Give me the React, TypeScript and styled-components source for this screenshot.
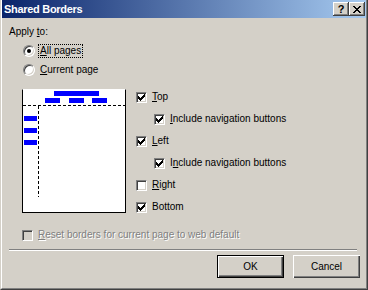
import styled, { createGlobalStyle } from "styled-components";

const GlobalStyle = createGlobalStyle`
  body {
    margin: 0;
    background: #d4d0c8;
    font-family: "Liberation Sans", Arial, sans-serif;
    font-size: 10px;
  }
`;

export const Window = styled.div`
  width: 368px;
  height: 290px;
  box-sizing: border-box;
  background: #d4d0c8;
  border-left: 1px solid #d4d0c8;
  border-right: 1px solid #404040;
  border-bottom: 1px solid #404040;
  display: flex;
  flex-direction: column;
`;

export const Frame = styled.div`
  flex: 1;
  min-height: 0;
  display: flex;
  flex-direction: column;
  border-left: 1px solid #fff;
  border-right: 1px solid #808080;
  border-bottom: 1px solid #808080;
`;

export const TitleBar = styled.div`
  height: 18px;
  flex-shrink: 0;
  display: flex;
  align-items: center;
  justify-content: space-between;
  padding: 0 1px 0 2px;
  background: linear-gradient(to right, #0a246a, #a6caf0);
`;

export const TitleText = styled.span`
  color: #fff;
  font-weight: bold;
  font-size: 11px;
  letter-spacing: -0.3px;
`;

export const TitleButtons = styled.div`
  display: flex;
`;

export const CaptionButton = styled.div`
  width: 16px;
  height: 14px;
  box-sizing: border-box;
  background: #d4d0c8;
  box-shadow: inset -1px -1px 0 #404040, inset 1px 1px 0 #fff, inset -2px -2px 0 #808080;
  display: flex;
  align-items: center;
  justify-content: center;
  font-weight: bold;
  font-size: 11px;
  line-height: 12px;
  color: #000;
`;

export const Content = styled.div`
  flex: 1;
  display: flex;
  flex-direction: column;
  padding: 8px 6px 0 7px;
`;

export const Caption = styled.div`
  height: 12px;
  line-height: 12px;
`;

export const RadioGroup = styled.div`
  display: flex;
  flex-direction: column;
  gap: 5px;
  margin: 6px 0 0 14px;
`;

export const OptionRow = styled.div<{ $indent?: number }>`
  display: flex;
  align-items: center;
  height: 14px;
  gap: 4px;
  margin-left: ${(p) => p.$indent ?? 0}px;
`;

export const RadioCircle = styled.span<{ $checked?: boolean }>`
  width: 12px;
  height: 12px;
  flex-shrink: 0;
  box-sizing: border-box;
  border-radius: 50%;
  border: 1px solid;
  border-color: #808080 #fff #fff #808080;
  background: #fff;
  box-shadow: inset 1px 1px 0 #404040, inset -1px -1px 0 #d4d0c8;
  display: flex;
  align-items: center;
  justify-content: center;
  &::after {
    content: "";
    width: 4px;
    height: 4px;
    border-radius: 50%;
    background: #000;
    display: ${(p) => (p.$checked ? "block" : "none")};
  }
`;

export const Label = styled.span<{ $focus?: boolean; $disabled?: boolean }>`
  line-height: 12px;
  white-space: nowrap;
  padding: 0 1px;
  outline: ${(p) => (p.$focus ? "1px dotted #000" : "none")};
  color: ${(p) => (p.$disabled ? "#808080" : "#000")};
  text-shadow: ${(p) => (p.$disabled ? "1px 1px 0 #fff" : "none")};
`;

export const MainRow = styled.div`
  display: flex;
  align-items: flex-start;
  margin-top: 12px;
`;

export const Preview = styled.div`
  width: 104px;
  height: 124px;
  box-sizing: border-box;
  margin-left: 13px;
  background: #fff;
  border: 1px solid #000;
  border-top-color: #fff;
  svg {
    display: block;
  }
`;

export const CheckColumn = styled.div`
  display: flex;
  flex-direction: column;
  gap: 6px;
  margin-left: 10px;
`;

export const CheckRow = styled.div<{ $indent?: boolean }>`
  display: flex;
  align-items: center;
  height: 16px;
  gap: 4px;
  margin-left: ${(p) => (p.$indent ? 18 : 0)}px;
`;

export const Box = styled.span<{ $disabled?: boolean }>`
  width: 11px;
  height: 11px;
  flex-shrink: 0;
  box-sizing: border-box;
  border: 1px solid;
  border-color: #808080 #fff #fff #808080;
  box-shadow: inset 1px 1px 0 #404040, inset -1px -1px 0 #d4d0c8;
  background: ${(p) => (p.$disabled ? "#d4d0c8" : "#fff")};
  display: flex;
  align-items: center;
  justify-content: center;
`;

export const ResetRow = styled(OptionRow)`
  margin-top: 13px;
  margin-left: 13px;
`;

export const Separator = styled.div`
  height: 0;
  border-top: 1px solid #808080;
  border-bottom: 1px solid #fff;
  margin: 7px 3px 0 0;
`;

export const ButtonRow = styled.div`
  display: flex;
  justify-content: flex-end;
  gap: 9px;
  margin-top: 4px;
`;

export const PushButton = styled.button<{ $default?: boolean }>`
  width: 67px;
  height: 23px;
  box-sizing: border-box;
  padding: 0;
  font-family: inherit;
  font-size: 10px;
  color: #000;
  background: #d4d0c8;
  border: ${(p) => (p.$default ? "1px solid #000" : "none")};
  box-shadow: inset 1px 1px 0 #fff, inset -1px -1px 0 #404040, inset -2px -2px 0 #808080;
`;

const Check = () => (
  <svg width="7" height="7" viewBox="0 0 7 7" shapeRendering="crispEdges">
    <path
      fill="#000"
      d="M6 0h1v1h-1z M5 1h2v1h-2z M0 2h1v1h-1z M4 2h3v1h-3z M0 3h2v1h-2z M3 3h3v1h-3z M0 4h5v1h-5z M1 5h3v1h-3z M2 6h1v1h-1z"
    />
  </svg>
);

const CloseGlyph = () => (
  <svg width="8" height="7" viewBox="0 0 8 7" shapeRendering="crispEdges">
    <path
      fill="#000"
      d="M0 0h2v1h-2z M6 0h2v1h-2z M1 1h2v1h-2z M5 1h2v1h-2z M2 2h4v1h-4z M3 3h2v1h-2z M2 4h4v1h-4z M1 5h2v1h-2z M5 5h2v1h-2z M0 6h2v1h-2z M6 6h2v1h-2z"
    />
  </svg>
);

const PagePreview = () => (
  <svg width="102" height="122" viewBox="0 0 102 122">
    <g fill="#0000ff">
      <rect x="31" y="1" width="45" height="5" />
      <rect x="22" y="8" width="15" height="5" />
      <rect x="46" y="8" width="15" height="5" />
      <rect x="69" y="8" width="15" height="5" />
      <rect x="1" y="26" width="13" height="5" />
      <rect x="1" y="38" width="13" height="5" />
      <rect x="1" y="50" width="13" height="5" />
    </g>
    <line x1="0" y1="15.5" x2="102" y2="15.5" stroke="#000" strokeDasharray="3 2" />
    <line x1="15.5" y1="16" x2="15.5" y2="107" stroke="#000" strokeDasharray="3 2" />
  </svg>
);

const CheckOption = ({
  checked,
  indent,
  children,
}: {
  checked: boolean;
  indent?: boolean;
  children: React.ReactNode;
}) => (
  <CheckRow $indent={indent}>
    <Box>{checked && <Check />}</Box>
    <Label>{children}</Label>
  </CheckRow>
);

export default function App() {
  return (
    <>
      <GlobalStyle />
      <Window>
        <Frame>
          <TitleBar>
            <TitleText>Shared Borders</TitleText>
            <TitleButtons>
              <CaptionButton>?</CaptionButton>
              <CaptionButton>
                <CloseGlyph />
              </CaptionButton>
            </TitleButtons>
          </TitleBar>
          <Content>
            <Caption>
              Apply <u>t</u>o:
            </Caption>
            <RadioGroup>
              <OptionRow>
                <RadioCircle $checked />
                <Label $focus>
                  <u>A</u>ll pages
                </Label>
              </OptionRow>
              <OptionRow>
                <RadioCircle />
                <Label>
                  <u>C</u>urrent page
                </Label>
              </OptionRow>
            </RadioGroup>
            <MainRow>
              <Preview>
                <PagePreview />
              </Preview>
              <CheckColumn>
                <CheckOption checked>
                  <u>T</u>op
                </CheckOption>
                <CheckOption checked indent>
                  <u>I</u>nclude navigation buttons
                </CheckOption>
                <CheckOption checked>
                  <u>L</u>eft
                </CheckOption>
                <CheckOption checked indent>
                  I<u>n</u>clude navigation buttons
                </CheckOption>
                <CheckOption checked={false}>
                  <u>R</u>ight
                </CheckOption>
                <CheckOption checked>Bottom</CheckOption>
              </CheckColumn>
            </MainRow>
            <ResetRow>
              <Box $disabled />
              <Label $disabled>
                <u>R</u>eset borders for current page to web default
              </Label>
            </ResetRow>
            <Separator />
            <ButtonRow>
              <PushButton $default>OK</PushButton>
              <PushButton>Cancel</PushButton>
            </ButtonRow>
          </Content>
        </Frame>
      </Window>
    </>
  );
}
